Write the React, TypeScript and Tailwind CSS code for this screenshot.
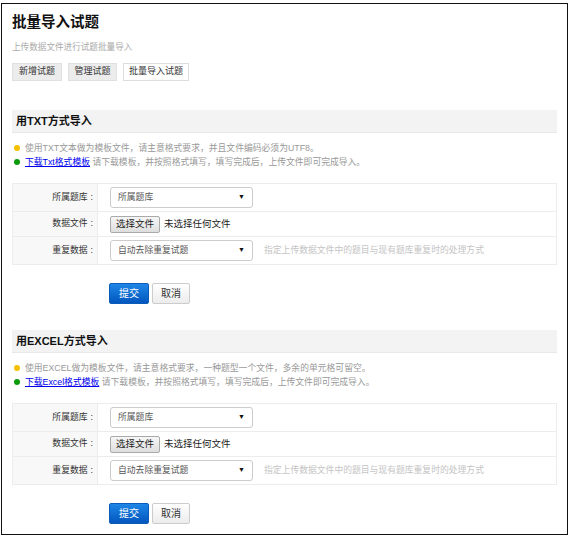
const FONT = { fontFamily: '"Liberation Sans", "Noto Sans CJK SC", sans-serif' }

function Section({
   title,
   tips,
   link,
   linkTip,
}: {
   title: string
   tips: string
   link: string
   linkTip: string
}) {
   return (
      <div className="flex flex-col">
         <div className="h-[23px] bg-[#f3f3f3] border-b border-[#e8e8e8] flex items-center px-[4px]">
            <span className="text-[11px] font-bold text-[#111]">{title}</span>
         </div>
         <div className="mt-[9px] flex flex-col gap-[2px] text-[8.8px] text-[#999] leading-[12px]">
            <div className="flex items-center gap-[5px] pl-[2px]">
               <span className="w-[6px] h-[6px] rounded-full bg-[#f5c000]" />
               <span>{tips}</span>
            </div>
            <div className="flex items-center gap-[5px] pl-[2px]">
               <span className="w-[6px] h-[6px] rounded-full bg-[#0a9a0a]" />
               <span>
                  <a className="text-[#0000ee] underline">{link}</a> {linkTip}
               </span>
            </div>
         </div>
         <div className="mt-[15px] border border-[#ececec] flex flex-col text-[8.8px]">
            <FormRow label="所属题库" h="h-[28px]">
               <Select value="所属题库" />
            </FormRow>
            <FormRow label="数据文件" h="h-[25px]">
               <div className="flex items-center gap-[4px]">
                  <span className="h-[17px] px-[5px] flex items-center border border-[#aaa] rounded-[2px] bg-gradient-to-b from-[#f6f6f6] to-[#dedede] text-[9.5px] text-[#222]">
                     选择文件
                  </span>
                  <span className="text-[9.5px] text-[#222]">未选择任何文件</span>
               </div>
            </FormRow>
            <FormRow label="重复数据" h="h-[27px]" last>
               <Select value="自动去除重复试题" />
               <span className="ml-[11px] text-[#c4c4c4]">
                  指定上传数据文件中的题目与现有题库重复时的处理方式
               </span>
            </FormRow>
         </div>
         <div className="mt-[18px] ml-[97px] flex gap-[3px]">
            <span className="w-[40px] h-[21px] flex items-center justify-center rounded-[2px] border border-[#0a5cb8] bg-gradient-to-b from-[#1e86e6] to-[#0456bd] text-white text-[10px]">
               提交
            </span>
            <span className="w-[38px] h-[21px] flex items-center justify-center rounded-[2px] border border-[#ccc] bg-gradient-to-b from-white to-[#ececec] text-[#333] text-[10px]">
               取消
            </span>
         </div>
      </div>
   )
}

function FormRow({
   label,
   h,
   last,
   children,
}: {
   label: string
   h: string
   last?: boolean
   children: React.ReactNode
}) {
   return (
      <div className={`flex ${h} ${last ? "" : "border-b border-[#ececec]"}`}>
         <div className="w-[85px] bg-[#f8f8f8] border-r border-[#ececec] flex items-center justify-end gap-[3px] pr-[4px] text-[#333]">
            <span>{label}</span>
            <span>:</span>
         </div>
         <div className="flex-1 flex items-center pl-[12px]">{children}</div>
      </div>
   )
}

function Select({ value }: { value: string }) {
   return (
      <div className="w-[143px] h-[21px] border border-[#ccc] rounded-[3px] bg-white flex items-center justify-between px-[7px] text-[#555]">
         <span>{value}</span>
         <span className="text-[7px] text-[#111]">▼</span>
      </div>
   )
}

export default function App() {
   return (
      <div className="w-[572px] h-[540px] bg-white pt-[3px] pl-[1px]" style={FONT}>
         <div className="w-[567px] h-[532px] border-[1.5px] border-[#111] flex flex-col px-[10px]">
            <h1 className="mt-[9px] text-[14.5px] font-bold text-[#111] leading-[18px]">批量导入试题</h1>
            <p className="mt-[10px] text-[8.6px] text-[#aaa] leading-[12px]">上传数据文件进行试题批量导入</p>
            <div className="mt-[10px] flex gap-[6px] text-[9px] text-[#333]">
               <span className="w-[50px] h-[18px] flex items-center justify-center bg-[#ececec] border border-[#e0e0e0]">
                  新增试题
               </span>
               <span className="w-[49px] h-[18px] flex items-center justify-center bg-[#ececec] border border-[#e0e0e0]">
                  管理试题
               </span>
               <span className="w-[66px] h-[18px] flex items-center justify-center bg-white border border-[#ddd]">
                  批量导入试题
               </span>
            </div>
            <div className="mt-[29px] w-[545px] flex flex-col gap-[26px]">
               <Section
                  title="用TXT方式导入"
                  tips="使用TXT文本做为模板文件，请主意格式要求，并且文件编码必须为UTF8。"
                  link="下载Txt格式模板"
                  linkTip="请下载模板，并按照格式填写，填写完成后，上传文件即可完成导入。"
               />
               <Section
                  title="用EXCEL方式导入"
                  tips="使用EXCEL做为模板文件，请主意格式要求，一种题型一个文件，多余的单元格可留空。"
                  link="下载Excel格式模板"
                  linkTip="请下载模板，并按照格式填写，填写完成后，上传文件即可完成导入。"
               />
            </div>
         </div>
      </div>
   )
}
